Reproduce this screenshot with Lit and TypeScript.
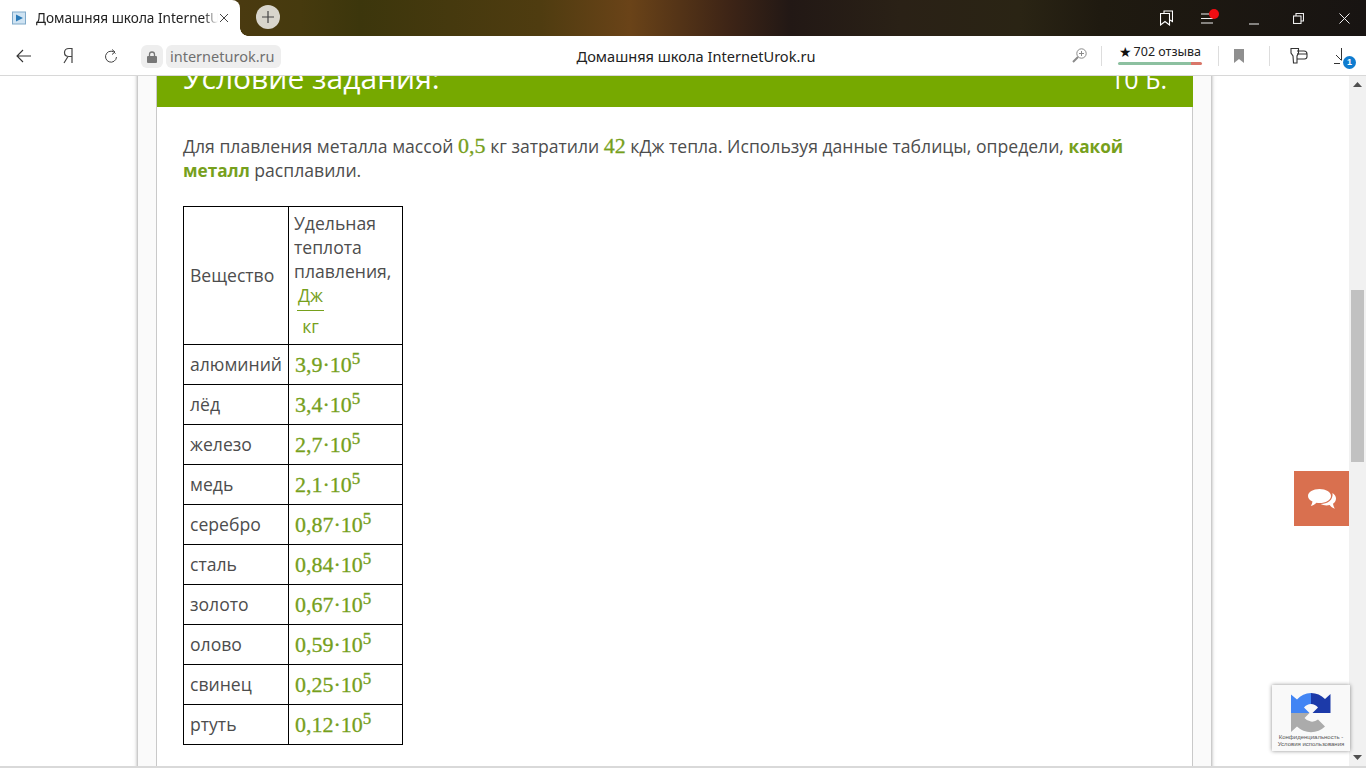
import { LitElement, html, css } from "lit";
import { customElement } from "lit/decorators.js";

const rows: [string, string][] = [
  ["алюминий", "3,9·10"],
  ["лёд", "3,4·10"],
  ["железо", "2,7·10"],
  ["медь", "2,1·10"],
  ["серебро", "0,87·10"],
  ["сталь", "0,84·10"],
  ["золото", "0,67·10"],
  ["олово", "0,59·10"],
  ["свинец", "0,25·10"],
  ["ртуть", "0,12·10"],
];

@customElement("app-root")
export class AppRoot extends LitElement {
  static styles = css`
    :host { display: block; width: 1366px; height: 768px; overflow: hidden; font-family: "Open Sans", sans-serif; background: #fff; position: relative; }
    * { box-sizing: border-box; }
    .root { display: flex; flex-direction: column; height: 768px; }
    .titlebar { height: 36px; flex: none; display: flex; align-items: stretch; background: linear-gradient(90deg, #4a3a10 240px, #463a0e 300px, #3c360c 360px, #4f3c10 540px, #6a4318 630px, #3d2416 730px, #221815 790px, #2a2116 900px, #2a2414 1020px, #1f1a10 1100px, #181412 1366px); }
    .tab { width: 240px; flex: none; background: #fff; border-top-right-radius: 8px; position: relative; display: flex; align-items: center; padding-left: 12px; }
    .tab::after { content: ""; position: absolute; left: 240px; bottom: 0; width: 8px; height: 8px; background: radial-gradient(circle at 100% 0, transparent 7.5px, #fff 8px); }
    .fav { width: 14px; height: 14px; flex: none; margin-right: 10px; display: block; }
    .tabtext { font: 13.6px/18px "Noto Sans", sans-serif; color: #222; width: 182px; white-space: nowrap; overflow: hidden; -webkit-mask-image: linear-gradient(90deg, #000 168px, transparent 182px); mask-image: linear-gradient(90deg, #000 168px, transparent 182px); }
    .tabx { width: 10px; height: 10px; margin-left: 1px; flex: none; display: block; }
    .plus { width: 24px; height: 24px; border-radius: 50%; background: #d8d5cc; margin: 5px 0 0 16px; display: flex; align-items: center; justify-content: center; flex: none; }
    .winctl { margin-left: auto; display: flex; align-items: center; height: 36px; }
    .winctl > div { display: flex; justify-content: center; align-items: center; height: 36px; position: relative; width: 44px; }
    .winctl > div:last-child { width: 46px; padding-left: 2px; }
    .nav { height: 40px; flex: none; background: #fff; border-top-right-radius: 10px; border-bottom: 1px solid #d8d8d8; position: relative; }
    .navl, .navr { display: flex; align-items: center; }
    .navl { position: absolute; left: 0; top: 0; height: 39px; }
    .navc { text-align: center; font: 14.6px/40px "Noto Sans", sans-serif; color: #222; padding-left: 26px; }
    .navr { position: absolute; right: 0; top: 0; height: 39px; }
    .lock { width: 22px; height: 23px; border-radius: 6px; background: #eee; margin: 2px 3px 0 0; display: flex; align-items: center; justify-content: center; }
    .url { height: 23px; width: 115px; border-radius: 6px; background: #eee; font: 14.5px/23px "Noto Sans", sans-serif; color: #707070; padding-left: 4px; margin-top: 2px; white-space: nowrap; }
    .ni { display: flex; align-items: center; justify-content: center; flex: none; }
    .divd { width: 1px; height: 20px; background: #ddd; flex: none; }
    .rating { width: 84px; margin: 0 16px; display: flex; flex-direction: column; align-items: center; flex: none; }
    .rtext { font: 12.5px/16px "Noto Sans", sans-serif; color: #222; white-space: nowrap; margin-top: -3px; display: flex; align-items: center; }
    .star { font: 14px/16px "DejaVu Sans", sans-serif; color: #111; margin-right: 2px; }
    .rbar { height: 3px; width: 84px; margin-top: 2px; border-radius: 2px; background: linear-gradient(90deg, #8cc0a0 87%, #d9776a 87%); }
    .dl { position: relative; }
    .dlbadge { position: absolute; right: 10px; bottom: 6px; width: 13px; height: 13px; border-radius: 50%; background: #0f7ccf; color: #fff; font: bold 9px/13px "Liberation Sans", sans-serif; text-align: center; }
    .dlicon { margin: 0 10px 0 0; }
    .view { flex: 1; min-height: 0; display: flex; overflow: hidden; position: relative; }
    .scrollarea { flex: 1; min-width: 0; padding-left: 138px; overflow: hidden; }
    .page { width: 1073px; min-height: 720px; background: #fafafa; box-shadow: 0 0 4px rgba(0,0,0,.5); padding: 0 18px; }
    .card { width: 1037px; background: #fff; border-left: 1px solid #c9c9c9; border-right: 1px solid #c9c9c9; margin-top: -30px; height: 730px; }
    .head { height: 61px; background: #76a900; color: #fff; display: flex; justify-content: space-between; align-items: baseline; padding: 12px 26px 0 26px; font-size: 30px; line-height: 40px; margin-right: -1px; }
    .pts { font-size: 25px; }
    .body { padding: 27px 26px 0 26px; color: #4d4d4d; font-size: 17.6px; line-height: 24px; }
    .body p { margin: 0 0 24px; width: 960px; height: 48px; }
    .body b { color: #76a01c; font-weight: 700; font-size: 17.2px; line-height: 0; }
    .m { font-family: "Liberation Serif", serif; font-size: 22px; line-height: 0; color: #76a01c; -webkit-text-stroke: 0.3px #76a01c; }
    .m sup { font-size: 17px; line-height: 0; vertical-align: 8px; }
    table { border-collapse: collapse; table-layout: fixed; width: 220px; }
    td { border: 1px solid #000; padding: 0 6px; height: 40px; vertical-align: middle; }
    td.c1 { width: 105px; padding-bottom: 2px; }
    td.c2 { padding-left: 5px; padding-right: 0; }
    td.c2 .m { margin-left: 1px; }
    .hd { height: 138px; }
    .hd td.c2 { padding-bottom: 2px; }
    .frac { display: inline-flex; flex-direction: column; align-items: center; color: #76a01c; margin-left: 3px; vertical-align: top; }
    .frac span { display: block; text-align: center; }
    .frac .n { border-bottom: 1px solid #76a01c; padding-bottom: 3px; width: 27px; }
    .frac .d { padding-top: 3px; width: 27px; }
    .sb { width: 17px; flex: none; background: #f1f1f1; display: flex; flex-direction: column; align-items: center; position: relative; }
    .arrow { height: 17px; width: 17px; flex: none; display: flex; align-items: center; justify-content: center; }
    .thumb { width: 13px; height: 172px; background: #c1c1c1; margin-top: 197px; }
    .spacer { flex: 1; }
    .bottom { height: 2px; flex: none; background: #d9d9d9; }
    .chat { position: absolute; left: 1294px; top: 395px; width: 55px; height: 55px; background: #d9704f; display: flex; align-items: center; justify-content: center; }
    .rc { position: absolute; left: 1272px; top: 609px; width: 78px; height: 66px; background: #f9f9f9; box-shadow: 0 0 4px rgba(0,0,0,.45); display: flex; flex-direction: column; align-items: center; padding-top: 8px; }
    .rct { font: 6px/6.5px "Liberation Sans", sans-serif; color: #555; text-align: center; white-space: nowrap; margin-top: 1px; }
  `;

  render() {
    const s = "#fff";
    return html`<div class="root">
      <div class="titlebar">
        <div class="tab">
          <svg class="fav" viewBox="0 0 14 14"><rect x="0.5" y="1" width="13" height="12" fill="#cfe3f2" stroke="#7fa9c9"/><path d="M4 3.5 11 7 4 10.5Z" fill="#2a7ab8"/></svg>
          <div class="tabtext">Домашняя школа InternetUrok.ru</div>
          <svg class="tabx" viewBox="0 0 10 10"><path d="M1 1 9 9M9 1 1 9" stroke="#444" stroke-width="1" fill="none"/></svg>
        </div>
        <div class="plus"><svg width="12" height="12" viewBox="0 0 12 12"><path d="M6 0V12M0 6H12" stroke="#444" stroke-width="1.2"/></svg></div>
        <div class="winctl">
          <div><svg width="13" height="16" viewBox="0 0 13 16" fill="none" stroke="${s}" stroke-width="1.1"><path d="M4 3V1H12.500V11.500L10 10"/><path d="M.5 3.500H9.500V15L5 11.500 .5 15Z"/></svg></div>
          <div><svg width="18" height="14" viewBox="0 0 18 14" style="overflow:visible"><path d="M0 3H8M0 7.500H12M0 12H12" stroke="#eee" stroke-width="1"/><circle cx="13" cy="3" r="5" fill="#f00d12"/></svg></div>
          <div><svg width="10" height="2" viewBox="0 0 10 2" style="margin-top:12px"><path d="M0 1H10" stroke="#eee"/></svg></div>
          <div><svg width="11" height="11" viewBox="0 0 11 11" fill="none" stroke="#eee" stroke-width="1.100"><rect x="0.500" y="3" width="7.500" height="7.500"/><path d="M3 3V.5H10.500V8H8"/></svg></div>
          <div><svg width="11" height="11" viewBox="0 0 11 11"><path d="M.5.5 10.500 10.500M10.500.5.5 10.500" stroke="#eee" fill="none"/></svg></div>
        </div>
      </div>
      <div class="nav">
        <div class="navl">
          <div class="ni" style="width:48px"><svg width="16" height="14" viewBox="0 0 16 14" fill="none" stroke="#333" stroke-width="1.100"><path d="M15 7H1M7 1 1 7 7 13"/></svg></div>
          <div class="ni" style="width:40px"><svg width="12" height="17" viewBox="0 0 12 17" fill="none" stroke="#444" stroke-width="1.200"><path d="M10 16V1.500H7C4 1.500 2.500 3.300 2.500 5.500S4 9.500 7 9.500H10M6 9.500 2 16"/></svg></div>
          <div class="ni" style="width:46px"><svg width="14" height="14" viewBox="0 0 14 14" fill="none" stroke="#444" stroke-width="1"><path d="M11.500 4.500A5.500 5.500 0 1 0 12.500 8M8 .5 11 3 8 5.500"/></svg></div>
          <div style="width:7px"></div>
          <div class="lock"><svg width="10" height="12" viewBox="0 0 10 12"><path d="M2.500 5V3.500a2.500 2.500 0 0 1 5 0V5" fill="none" stroke="#777" stroke-width="1.300"/><rect y="5" width="10" height="7" rx="1" fill="#777"/></svg></div>
          <div class="url">interneturok.ru</div>
        </div>
        <div class="navc">Домашняя школа InternetUrok.ru</div>
        <div class="navr">
          <div class="ni" style="width:16px"><svg width="15" height="15" viewBox="0 0 15 15" fill="none" stroke="#8a8a8a"><circle cx="9.500" cy="5.500" r="4.700"/><path d="M9.500 3V8M7 5.500H12"/><path d="M6 9 1 14" stroke-width="2"/></svg></div>
          <div style="width:14px"></div>
          <div class="divd"></div>
          <div class="rating">
            <div class="rtext"><span class="star">★</span>702 отзыва</div>
            <div class="rbar"></div>
          </div>
          <div class="divd"></div>
          <div class="ni" style="width:40px"><svg width="10" height="14" viewBox="0 0 10 14"><path d="M0 0H10V14L5 10 0 14Z" fill="#8f8f8f"/></svg></div>
          <div class="divd" style="margin-left:10px"></div>
          <div class="ni" style="width:58px"><svg width="18" height="17" viewBox="0 0 18 17" fill="none" stroke="#333" stroke-width="1.100"><path d="M1 1.500H8.500V6L7 9V16H3.500L3 9 1 6Z"/><path d="M7 4H14A3 3 0 0 1 17 7V9.500A2.500 2.500 0 0 1 14.500 12H7M7 7H17"/></svg></div>
          <div class="ni dl" style="width:38px;height:39px"><svg class="dlicon" width="16" height="16" viewBox="0 0 16 16" fill="none" stroke="#333" stroke-width="1"><path d="M7.500 0V12M2 7 7.500 12.500M0 15.500H6"/></svg><div class="dlbadge">1</div></div>
        </div>
      </div>
      <div class="view">
        <div class="scrollarea">
          <div class="page">
            <div class="card">
              <div class="head"><span>Условие задания:</span><span class="pts">10 Б.</span></div>
              <div class="body">
                <p>Для плавления металла массой <span class="m">0,5</span> кг затратили <span class="m">42</span> кДж тепла. Используя данные таблицы, определи, <b>какой металл</b> расплавили.</p>
                <table>
                  <tr class="hd">
                    <td class="c1">Вещество</td>
                    <td class="c2">Удельная теплота плавления,<br /><span class="frac"><span class="n">Дж</span><span class="d">кг</span></span></td>
                  </tr>
                  ${rows.map(([a, b]) => html`<tr><td class="c1">${a}</td><td class="c2"><span class="m">${b}<sup>5</sup></span></td></tr>`)}
                </table>
              </div>
            </div>
          </div>
        </div>
        <div class="sb">
          <div class="arrow"><svg width="9" height="5" viewBox="0 0 9 5"><path d="M0 5 4.500 0 9 5Z" fill="#505050"/></svg></div>
          <div class="thumb"></div>
          <div class="spacer"></div>
          <div class="arrow"><svg width="9" height="5" viewBox="0 0 9 5"><path d="M0 0 4.500 5 9 0Z" fill="#505050"/></svg></div>
        </div>
        <div class="chat"><svg width="28" height="20" viewBox="0 0 28 20"><path d="M11.500 0C5.100 0 0 3.100 0 7c0 2.300 1.800 4.300 4.500 5.600C4.300 14 3.700 15.500 2.800 17c2.300-.5 4.300-1.700 5.700-3.200 1 .2 2 .3 3 .3 6.400 0 11.500-3.200 11.500-7.100S17.900 0 11.500 0Z" fill="#fff"/><path d="M24.500 4C26.700 5.500 28 7.400 28 9.500c0 2.100-1.100 3.900-3 5.200.3 1.900 1 3.600 1.800 5-2.200-.7-3.900-2-5.100-3.600-1 .2-2.100.3-3.200.3-2.200 0-4.300-.5-5.900-1.300 6.600-.3 12.900-3.700 11.900-11.100Z" fill="#fff"/></svg></div>
        <div class="rc">
          <svg width="40" height="40" viewBox="0 0 40 40">
            <path d="M0 20H18.500L13.500 25A9.500 9.500 0 0 0 27 26.500L34 33.500A20 20 0 0 1 6 33.500L0 39Z" fill="#ababab"/>
            <path d="M20 0V11A9.500 9.500 0 0 0 13 14.500L18.500 20H0V1.500L6 6.500A20 20 0 0 1 20 0Z" fill="#4285f4"/>
            <path d="M20 0A20 20 0 0 1 34 6L39.500 1V20H21.500L27 14.500A9.500 9.500 0 0 0 20 11Z" fill="#1c3aa9"/>
          </svg>
          <div class="rct">Конфиденциальность -<br />Условия использования</div>
        </div>
      </div>
      <div class="bottom"></div>
    </div>`;
  }
}
